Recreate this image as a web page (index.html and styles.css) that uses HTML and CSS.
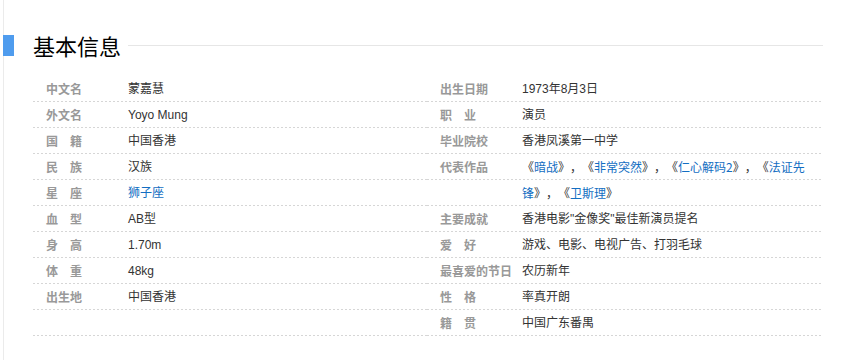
FILE: index.html
```html
<!DOCTYPE html>
<html lang="zh-CN">
<head>
<meta charset="utf-8">
<title>基本信息</title>
<link rel="stylesheet" href="styles.css">
</head>
<body>
<div class="page">
  <div class="heading">
    <span class="bar"></span>
    <h2 class="title">基本信息</h2>
    <span class="rule"></span>
  </div>
  <div class="basic-info">
    <dl class="block">
      <div class="item"><dt>中文名</dt><dd>蒙嘉慧</dd></div>
      <div class="item"><dt>外文名</dt><dd>Yoyo Mung</dd></div>
      <div class="item"><dt>国　籍</dt><dd>中国香港</dd></div>
      <div class="item"><dt>民　族</dt><dd>汉族</dd></div>
      <div class="item"><dt>星　座</dt><dd><a href="#">狮子座</a></dd></div>
      <div class="item"><dt>血　型</dt><dd>AB型</dd></div>
      <div class="item"><dt>身　高</dt><dd>1.70m</dd></div>
      <div class="item"><dt>体　重</dt><dd>48kg</dd></div>
      <div class="item"><dt>出生地</dt><dd>中国香港</dd></div>
    </dl>
    <dl class="block">
      <div class="item"><dt>出生日期</dt><dd>1973年8月3日</dd></div>
      <div class="item"><dt>职　业</dt><dd>演员</dd></div>
      <div class="item"><dt>毕业院校</dt><dd>香港凤溪第一中学</dd></div>
      <div class="item"><dt>代表作品</dt><dd class="works">《<a href="#">暗战</a>》，《<a href="#">非常突然</a>》，《<a href="#">仁心解码2</a>》，《<a href="#">法证先锋</a>》，《<a href="#">卫斯理</a>》</dd></div>
      <div class="item"><dt>主要成就</dt><dd>香港电影"金像奖"最佳新演员提名</dd></div>
      <div class="item"><dt>爱　好</dt><dd>游戏、电影、电视广告、打羽毛球</dd></div>
      <div class="item"><dt>最喜爱的节日</dt><dd>农历新年</dd></div>
      <div class="item"><dt>性　格</dt><dd>率真开朗</dd></div>
      <div class="item"><dt>籍　贯</dt><dd>中国广东番禺</dd></div>
    </dl>
  </div>
</div>
</body>
</html>
```
FILE: styles.css
```css
html, body {
  margin: 0;
  padding: 0;
  background: #fff;
}
body {
  font-family: "Liberation Sans", "Noto Sans CJK SC", sans-serif;
  font-size: 12px;
  color: #333;
  text-spacing-trim: space-all;
}
.page {
  margin-left: 3px;
  border-left: 1px solid #ebebeb;
  min-height: 360px;
  box-sizing: border-box;
  padding: 34px 18px 0 0;
}
.heading {
  display: flex;
  align-items: center;
  height: 22px;
  margin-left: -1px;
}
.bar {
  width: 11px;
  height: 21px;
  background: #4f9cee;
  flex: none;
}
.title {
  margin: 0 0 0 19px;
  font-family: "Noto Sans CJK SC", sans-serif;
  font-weight: normal;
  font-size: 22px;
  line-height: 22px;
  color: #000;
}
.rule {
  flex: 1;
  height: 1px;
  background: #e6e6e6;
  margin-left: 7px;
}
.basic-info {
  display: grid;
  grid-template-columns: 394px 396px;
  margin: 20px 0 0 29px;
}
.block {
  margin: 0;
  background:
    linear-gradient(#fff 25px, transparent 25px) 0 0 / 100% 26px,
    linear-gradient(to right, #d6d6d6 2px, transparent 2px) 0 0 / 4px 26px;
}
.item {
  display: flex;
  line-height: 26px;
}
dt {
  flex: none;
  width: 77px;
  padding: 0 5px 0 13px;
  font-family: "Noto Sans CJK SC", sans-serif;
  font-weight: bold;
  color: #999;
  white-space: nowrap;
}
dd {
  margin: 0;
  width: 290px;
  padding-right: 10px;
}
.works {
  font-family: "Noto Sans CJK SC", sans-serif;
}
a {
  color: #136ec2;
  text-decoration: none;
}
```
